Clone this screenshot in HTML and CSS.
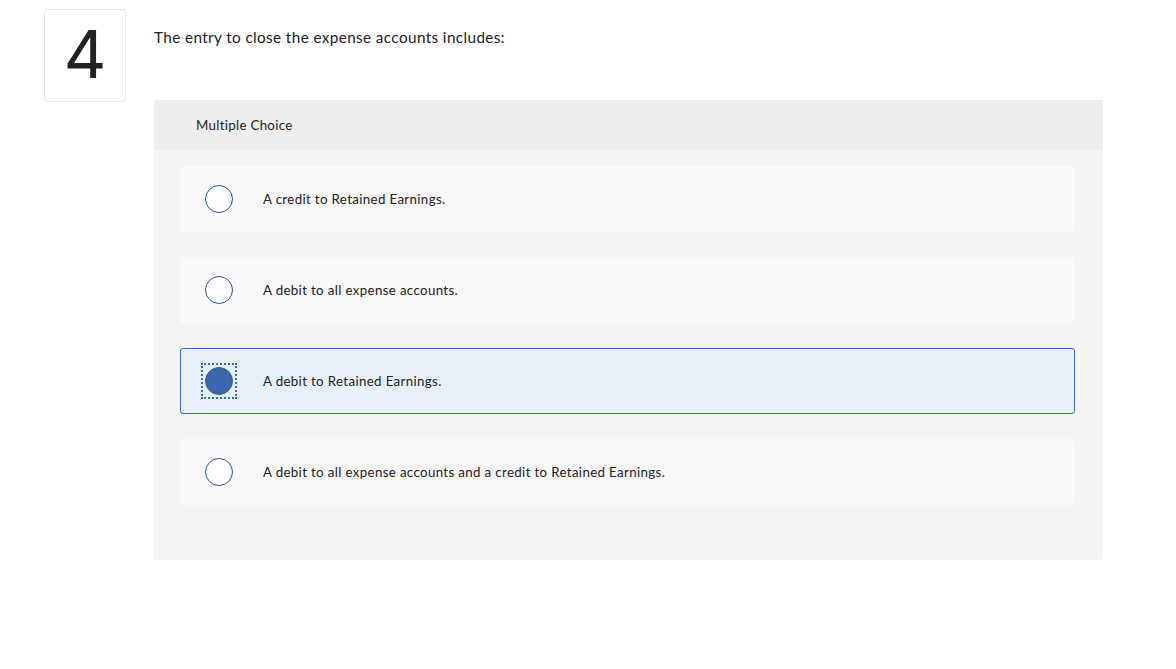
FILE: index.html
```html
<!DOCTYPE html>
<html>
<head>
<meta charset="utf-8">
<link rel="stylesheet" href="styles.css">
</head>
<body>
<div class="page">
  <div class="qnum">4</div>
  <div class="main">
    <p class="prompt">The entry to close the expense accounts includes:</p>
    <div class="panel">
      <div class="panel-head">Multiple Choice</div>
      <div class="panel-body">
        <div class="option">
          <span class="focus"><span class="radio"></span></span>
          <span class="label">A credit to Retained Earnings.</span>
        </div>
        <div class="option">
          <span class="focus"><span class="radio"></span></span>
          <span class="label">A debit to all expense accounts.</span>
        </div>
        <div class="option selected">
          <span class="focus focused"><span class="radio checked"></span></span>
          <span class="label">A debit to Retained Earnings.</span>
        </div>
        <div class="option">
          <span class="focus"><span class="radio"></span></span>
          <span class="label">A debit to all expense accounts and a credit to Retained Earnings.</span>
        </div>
      </div>
    </div>
  </div>
</div>
</body>
</html>
```
FILE: styles.css
```css
html, body {
  margin: 0;
  padding: 0;
  background: #ffffff;
}
body {
  font-family: "Lato", "Open Sans", sans-serif;
  color: #1f1f1f;
}
.page {
  display: flex;
  align-items: flex-start;
  padding: 9px 0 0 44px;
}
.qnum {
  box-sizing: border-box;
  width: 82px;
  height: 93px;
  border: 1px solid #e6e6e6;
  border-radius: 4px;
  display: flex;
  align-items: center;
  justify-content: center;
  font-family: "Inter", "Lato", sans-serif;
  font-size: 66px;
  font-weight: 400;
  color: #222222;
  line-height: 1;
  padding-bottom: 4px;
}
.main {
  margin-left: 28px;
  width: 949px;
}
.prompt {
  margin: 18px 0 0 0;
  font-size: 15.3px;
  letter-spacing: 0.38px;
  line-height: 20px;
  color: #222222;
}
.panel {
  margin-top: 53px;
  background: #f4f4f4;
  border-radius: 2px;
}
.panel-head {
  background: #eeeeee;
  height: 50px;
  display: flex;
  align-items: center;
  padding-left: 42px;
  font-size: 13.3px;
  letter-spacing: 0.3px;
  color: #222222;
}
.panel-body {
  padding: 16px 28px 55px 26px;
  display: flex;
  flex-direction: column;
  gap: 25px;
}
.option {
  box-sizing: border-box;
  height: 66px;
  background: #f9f9f9;
  border: 1px solid #f9f9f9;
  border-radius: 3px;
  display: flex;
  align-items: center;
  padding-left: 20px;
}
.option.selected {
  background: #e8f0fa;
  border-color: #3a6cc0;
}
.focus {
  box-sizing: border-box;
  width: 36px;
  height: 36px;
  padding: 4px;
  border: 2px dotted transparent;
  display: flex;
  align-items: center;
  justify-content: center;
  flex: none;
}
.focus.focused {
  border-color: #3a6cc0;
}
.radio {
  box-sizing: border-box;
  width: 28px;
  height: 28px;
  border-radius: 50%;
  border: 1.5px solid #2d568f;
  background: #ffffff;
  flex: none;
}
.radio.checked {
  background: #3d68b0;
  border-color: #335c9e;
}
.label {
  margin-left: 26px;
  font-size: 13.3px;
  letter-spacing: 0.35px;
  color: #222222;
}
```
